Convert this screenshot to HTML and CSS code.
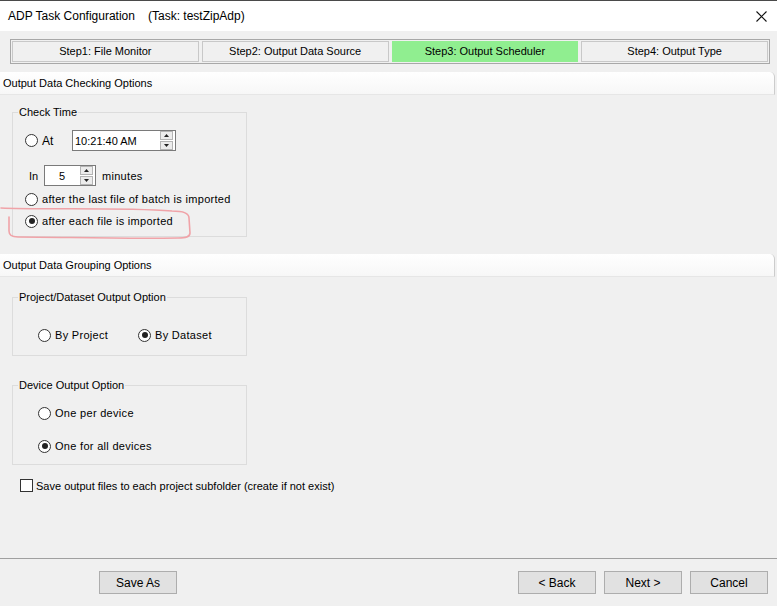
FILE: index.html
```html
<!DOCTYPE html>
<html lang="en">

<head>
    <meta charset="UTF-8">
    <title>ADP Task Configuration</title>
    <link rel="stylesheet" href="styles.css">
</head>

<body>
    <div class="window">
        <div class="titlebar">
            <span class="title">ADP Task Configuration</span>
            <span class="task">(Task: testZipAdp)</span>
            <svg class="close" width="11" height="11" viewBox="0 0 11 11">
                <path d="M0.5 0.5 L10.5 10.5 M10.5 0.5 L0.5 10.5" stroke="#111" stroke-width="1.1" fill="none" />
            </svg>
        </div>

        <div class="content">
            <div class="tabs">
                <div class="tab">Step1: File Monitor</div>
                <div class="tab">Step2: Output Data Source</div>
                <div class="tab active">Step3: Output Scheduler</div>
                <div class="tab">Step4: Output Type</div>
            </div>

            <div class="section-head">Output Data Checking Options</div>

            <fieldset class="group check-time">
                <legend>Check Time</legend>
                <div class="group-body">
                    <div class="row at-row">
                        <span class="radio"></span>
                        <span class="at-label">At</span>
                        <div class="spinbox time-box">
                            <span class="spin-value">10:21:40 AM</span>
                            <span class="spin">
                                <span class="spin-btn"><svg width="5" height="3"><path d="M2.5 0 L5 3 L0 3 Z" fill="#222" /></svg></span>
                                <span class="spin-btn"><svg width="5" height="3"><path d="M0 0 L5 0 L2.5 3 Z" fill="#222" /></svg></span>
                            </span>
                        </div>
                    </div>
                    <div class="row in-row">
                        <span class="in-label">In</span>
                        <div class="spinbox minutes-box">
                            <span class="spin-value">5</span>
                            <span class="spin">
                                <span class="spin-btn"><svg width="5" height="3"><path d="M2.5 0 L5 3 L0 3 Z" fill="#222" /></svg></span>
                                <span class="spin-btn"><svg width="5" height="3"><path d="M0 0 L5 0 L2.5 3 Z" fill="#222" /></svg></span>
                            </span>
                        </div>
                        <span class="unit">minutes</span>
                    </div>
                    <div class="row opt">
                        <span class="radio"></span>
                        <span>after the last file of batch is imported</span>
                    </div>
                    <div class="row opt">
                        <span class="radio checked"></span>
                        <span>after each file is imported</span>
                    </div>
                </div>
            </fieldset>

            <!-- hand drawn highlight from the screenshot -->
            <svg class="scribble" width="200" height="40" viewBox="0 0 200 40">
                <path d="M1 3 C40 5 120 2 172 6 C184 6 189 8 189 13 L190 28 C190 32 186 33 178 33 C120 34 60 32 18 32 C11 32 9 30 9 26 L9 12"
                    stroke="#f0a3a8" stroke-width="1.6" fill="none" stroke-linecap="round" />
            </svg>

            <div class="section-head second">Output Data Grouping Options</div>

            <fieldset class="group project-group">
                <legend>Project/Dataset Output Option</legend>
                <div class="group-body inline-opts">
                    <div class="row opt by-project">
                        <span class="radio"></span>
                        <span>By Project</span>
                    </div>
                    <div class="row opt">
                        <span class="radio checked"></span>
                        <span>By Dataset</span>
                    </div>
                </div>
            </fieldset>

            <fieldset class="group device-group">
                <legend>Device Output Option</legend>
                <div class="group-body">
                    <div class="row opt">
                        <span class="radio"></span>
                        <span>One per device</span>
                    </div>
                    <div class="row opt second-opt">
                        <span class="radio checked"></span>
                        <span>One for all devices</span>
                    </div>
                </div>
            </fieldset>

            <div class="row check-row">
                <span class="checkbox"></span>
                <span>Save output files to each project subfolder (create if not exist)</span>
            </div>
        </div>

        <div class="footer">
            <button class="btn save-btn">Save As</button>
            <div class="nav-btns">
                <button class="btn">&lt; Back</button>
                <button class="btn">Next &gt;</button>
                <button class="btn">Cancel</button>
            </div>
        </div>
    </div>
</body>

</html>
```

FILE: styles.css
```css
body {
    margin: 0;
    background-color: #f0f0f0;
    font-family: "Liberation Sans", Arial, sans-serif;
    font-size: 11px;
    color: #000;
}

.window {
    width: 777px;
    height: 606px;
    display: flex;
    flex-direction: column;
    overflow: hidden;
}

.titlebar {
    height: 30px;
    border-top: 1px solid #4a4a4a;
    background-color: #fff;
    display: flex;
    align-items: center;
    padding-left: 8px;
    font-size: 12px;
}

.task {
    margin-left: 13px;
}

.close {
    margin-left: auto;
    margin-right: 10px;
}

.content {
    flex: 1;
    position: relative;
}

.tabs {
    margin: 8px 7px 0 10px;
    height: 21px;
    border: 1px solid #a8a8a8;
    padding: 1px;
    display: grid;
    grid-template-columns: 1fr 1fr 1fr 1fr;
    gap: 3px;
}

.tab {
    border: 1px solid #c8c8c8;
    text-align: center;
    line-height: 18px;
}

.tab.active {
    background-color: #90ee90;
    border-color: #90ee90;
}

.section-head {
    margin: 8px 2px 0 0;
    height: 22px;
    line-height: 22px;
    padding-left: 3px;
    background: linear-gradient(#ffffff, #f7f7f7);
    border-bottom: 1px solid #e6e6e6;
    border-right: 1px solid #cccccc;
    border-radius: 0 5px 0 0;
}

.section-head.second {
    margin-top: 17px;
}

.group {
    margin: 9px 0 0 12px;
    width: 235px;
    box-sizing: border-box;
    border: 1px solid #dcdcdc;
    padding: 0;
}

.group legend {
    margin-left: 5px;
    padding: 0 1px;
    line-height: 16px;
}

.group-body {
    padding: 0 0 7px 12px;
}

.row {
    display: flex;
    align-items: center;
}

.opt {
    height: 16px;
    letter-spacing: 0.3px;
}

.radio {
    width: 11px;
    height: 11px;
    border: 1px solid #333;
    border-radius: 50%;
    background-color: #fff;
    margin-right: 4px;
    display: flex;
    align-items: center;
    justify-content: center;
    flex-shrink: 0;
}

.radio.checked::after {
    content: "";
    width: 6px;
    height: 6px;
    border-radius: 50%;
    background-color: #222;
}

.at-row {
    margin-top: 10px;
    height: 21px;
}

.at-label {
    width: 30px;
    font-size: 12px;
}

.spinbox {
    height: 21px;
    box-sizing: border-box;
    border: 1px solid #7a7a7a;
    background-color: #fff;
    display: flex;
    align-items: center;
    padding-left: 2px;
}

.time-box {
    width: 104px;
}

.minutes-box {
    width: 52px;
}

.minutes-box .spin-value {
    padding-left: 12px;
}

.spin-value {
    flex: 1;
}

.spin {
    width: 13px;
    margin-right: 2px;
    display: flex;
    flex-direction: column;
    gap: 1px;
}

.spin-btn {
    height: 7px;
    border: 1px solid #b4b4b4;
    background-color: #ececec;
    display: flex;
    align-items: center;
    justify-content: center;
}

.in-row {
    margin-top: 14px;
    height: 21px;
}

.in-label {
    margin-left: 4px;
    width: 15px;
}

.unit {
    margin-left: 6px;
    letter-spacing: 0.3px;
}

.check-time .opt {
    margin-top: 6px;
}

.check-time .in-row + .opt {
    margin-top: 5px;
}

.scribble {
    position: absolute;
    left: 0;
    top: 174px;
}

.project-group {
    margin-top: 12px;
}

.inline-opts {
    display: flex;
}

.project-group .group-body {
    padding: 22px 0 12px 25px;
}

.by-project {
    width: 100px;
}

.device-group {
    margin-top: 21px;
}

.device-group .group-body {
    padding: 12px 0 10px 25px;
}

.device-group .second-opt {
    margin-top: 17px;
}

.check-row {
    margin: 14px 0 0 20px;
    height: 13px;
}

.checkbox {
    width: 11px;
    height: 11px;
    border: 1px solid #333;
    background-color: #fff;
    margin-right: 3px;
}

.footer {
    height: 48px;
    box-sizing: border-box;
    border-top: 1px solid #a0a0a0;
    display: flex;
    align-items: flex-start;
    padding-top: 12px;
}

.btn {
    width: 78px;
    height: 23px;
    border: 1px solid #adadad;
    background-color: #e1e1e1;
    font-family: "Liberation Sans", Arial, sans-serif;
    font-size: 12px;
    color: #000;
    padding: 0;
}

.save-btn {
    margin-left: 99px;
}

.nav-btns {
    margin-left: auto;
    margin-right: 9px;
    display: flex;
    gap: 8px;
}
```
